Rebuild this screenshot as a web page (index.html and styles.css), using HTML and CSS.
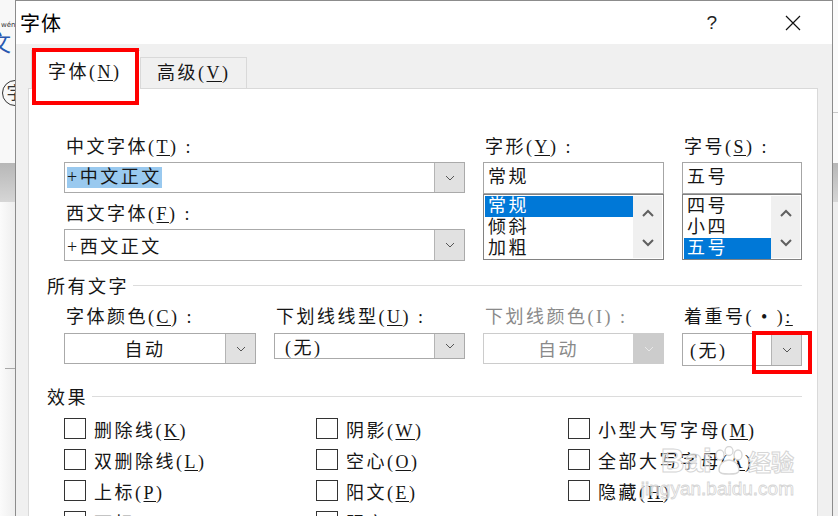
FILE: index.html
```html
<!DOCTYPE html>
<html lang="zh-CN">
<head>
    <meta charset="UTF-8">
    <title>字体</title>
    <link rel="stylesheet" href="styles.css">
</head>
<body>
    <div class="app-edge app-left">
        <div class="ribbon">
            <div class="ruby"><span class="pinyin">wén</span><span class="blue-char">文</span></div>
            <div class="circle-char">字</div>
        </div>
        <div class="band"></div>
        <div class="below"><div class="rule"></div></div>
    </div>

    <div class="dialog">
        <div class="titlebar">
            <span class="title">字体</span>
            <span class="help">?</span>
            <svg class="close" width="16" height="16" viewBox="0 0 16 16"><path d="M1 1L15 15M15 1L1 15" stroke="#111" stroke-width="1.2" fill="none"/></svg>
        </div>

        <div class="dialog-body">
            <div class="tabs">
                <div class="tab active">字体(<u>N</u>)</div>
                <div class="tab">高级(<u>V</u>)</div>
            </div>

            <div class="panel">
                <div class="font-row">
                    <div class="col col-main">
                        <div class="label">中文字体(<u>T</u>) :</div>
                        <div class="combo tall">
                            <span class="value"><span class="selected-text">+中文正文</span></span>
                            <span class="drop"><svg width="10" height="6" viewBox="0 0 10 6"><path d="M1 1L5 5L9 1" fill="none" stroke="#555" stroke-width="1"/></svg></span>
                        </div>
                        <div class="label second">西文字体(<u>F</u>) :</div>
                        <div class="combo taller">
                            <span class="value">+西文正文</span>
                            <span class="drop"><svg width="10" height="6" viewBox="0 0 10 6"><path d="M1 1L5 5L9 1" fill="none" stroke="#555" stroke-width="1"/></svg></span>
                        </div>
                    </div>

                    <div class="col col-style">
                        <div class="label">字形(<u>Y</u>) :</div>
                        <div class="textbox">常规</div>
                        <div class="listbox">
                            <div class="items">
                                <div class="item selected">常规</div>
                                <div class="item">倾斜</div>
                                <div class="item">加粗</div>
                            </div>
                            <div class="scroll">
                                <svg width="12" height="8" viewBox="0 0 12 8"><path d="M1 7L6 2L11 7" fill="none" stroke="#606060" stroke-width="2"/></svg>
                                <svg width="12" height="8" viewBox="0 0 12 8"><path d="M1 1L6 6L11 1" fill="none" stroke="#606060" stroke-width="2"/></svg>
                            </div>
                        </div>
                    </div>

                    <div class="col col-size">
                        <div class="label">字号(<u>S</u>) :</div>
                        <div class="textbox">五号</div>
                        <div class="listbox">
                            <div class="items">
                                <div class="item">四号</div>
                                <div class="item">小四</div>
                                <div class="item selected">五号</div>
                            </div>
                            <div class="scroll">
                                <svg width="12" height="8" viewBox="0 0 12 8"><path d="M1 7L6 2L11 7" fill="none" stroke="#606060" stroke-width="2"/></svg>
                                <svg width="12" height="8" viewBox="0 0 12 8"><path d="M1 1L6 6L11 1" fill="none" stroke="#606060" stroke-width="2"/></svg>
                            </div>
                        </div>
                    </div>
                </div>

                <div class="group-title"><span>所有文字</span><i></i></div>

                <div class="all-row">
                    <div class="field">
                        <div class="label">字体颜色(<u>C</u>) :</div>
                        <div class="combo tall center">
                            <span class="value">自动</span>
                            <span class="drop"><svg width="10" height="6" viewBox="0 0 10 6"><path d="M1 1L5 5L9 1" fill="none" stroke="#555" stroke-width="1"/></svg></span>
                        </div>
                    </div>
                    <div class="field">
                        <div class="label">下划线线型(<u>U</u>) :</div>
                        <div class="combo short-box indent">
                            <span class="value">(无)</span>
                            <span class="drop"><svg width="10" height="6" viewBox="0 0 10 6"><path d="M1 1L5 5L9 1" fill="none" stroke="#555" stroke-width="1"/></svg></span>
                        </div>
                    </div>
                    <div class="field disabled">
                        <div class="label">下划线颜色(I) :</div>
                        <div class="combo tall center">
                            <span class="value">自动</span>
                            <span class="drop"><svg width="10" height="6" viewBox="0 0 10 6"><path d="M1 1L5 5L9 1" fill="none" stroke="#e8e8e8" stroke-width="1"/></svg></span>
                        </div>
                    </div>
                    <div class="field">
                        <div class="label">着重号(&nbsp;•&nbsp;)<u>:</u></div>
                        <div class="combo tallest">
                            <span class="value">(无)</span>
                            <span class="drop"><svg width="10" height="6" viewBox="0 0 10 6"><path d="M1 1L5 5L9 1" fill="none" stroke="#555" stroke-width="1"/></svg></span>
                        </div>
                    </div>
                </div>

                <div class="group-title effects-title"><span>效果</span><i></i></div>

                <div class="effects">
                    <label class="check"><span class="box"></span><span>删除线(<u>K</u>)</span></label>
                    <label class="check"><span class="box"></span><span>阴影(<u>W</u>)</span></label>
                    <label class="check"><span class="box"></span><span>小型大写字母(<u>M</u>)</span></label>
                    <label class="check"><span class="box"></span><span>双删除线(<u>L</u>)</span></label>
                    <label class="check"><span class="box"></span><span>空心(<u>O</u>)</span></label>
                    <label class="check"><span class="box"></span><span>全部大写字母(<u>A</u>)</span></label>
                    <label class="check"><span class="box"></span><span>上标(<u>P</u>)</span></label>
                    <label class="check"><span class="box"></span><span>阳文(<u>E</u>)</span></label>
                    <label class="check"><span class="box"></span><span>隐藏(<u>H</u>)</span></label>
                    <label class="check"><span class="box"></span><span>下标(<u>B</u>)</span></label>
                    <label class="check"><span class="box"></span><span>阴文(<u>G</u>)</span></label>
                </div>
            </div>
        </div>
    </div>

    <div class="app-edge app-right">
        <div class="ribbon"><div class="rule"></div></div>
        <div class="band"></div>
        <div class="below"></div>
    </div>

    <!-- annotation boxes from the screenshot -->
    <div class="mark mark-tab"></div>
    <div class="mark mark-emphasis"></div>

    <div class="watermark">
        <div class="wm-logo">Bai<svg width="34" height="30" viewBox="0 0 34 30"><g fill="#fff" stroke="#d6d6d6" stroke-width="1.3"><ellipse cx="8" cy="9" rx="4" ry="5"/><ellipse cx="17" cy="5" rx="4" ry="4.5"/><ellipse cx="26" cy="9" rx="4" ry="5"/><path d="M7 24c0-6 5-10 10-10s10 4 10 10c0 4-5 4-10 4s-10 0-10-4z"/></g></svg><span class="wm-cn">经验</span></div>
        <div class="wm-url">jingyan.baidu.com</div>
    </div>
</body>
</html>
```

FILE: styles.css
```css
* {
    box-sizing: border-box;
}

body {
    margin: 0;
    width: 838px;
    height: 516px;
    overflow: hidden;
    display: flex;
    position: relative;
    background-color: #f3f3f3;
    font-family: "Liberation Serif", "Noto Sans CJK SC", serif;
    font-size: 18px;
    letter-spacing: 2.5px;
    color: #161616;
}

u {
    text-decoration-thickness: 1px;
    text-underline-offset: 2px;
}

/* Word window showing behind the dialog */
.app-edge {
    flex: none;
    display: flex;
    flex-direction: column;
    overflow: hidden;
}

.app-left {
    width: 15px;
}

.app-right {
    width: 5px;
}

.ribbon {
    height: 163px;
    background-color: #f8f8f8;
    overflow: hidden;
}

.app-left .ribbon {
    padding-top: 22px;
}

.ruby {
    display: flex;
    flex-direction: column;
    line-height: 1;
    letter-spacing: 0;
}

.pinyin {
    font-family: "DejaVu Sans", sans-serif;
    font-size: 7px;
    color: #333;
    margin-left: 1px;
}

.blue-char {
    font-family: "Noto Sans CJK SC", sans-serif;
    font-size: 22px;
    color: #2857b0;
    margin-left: -11px;
    margin-top: 1px;
}

.circle-char {
    width: 26px;
    height: 26px;
    margin: 28px 0 0 2px;
    border: 1.5px solid #333;
    border-radius: 50%;
    font-family: "Noto Sans CJK SC", sans-serif;
    font-size: 17px;
    line-height: 22px;
    letter-spacing: 0;
    text-align: center;
    color: #333;
}

.band {
    height: 39px;
    background: linear-gradient(#b7b7b7, #d6d6d6);
}

.below {
    flex: 1;
    background: linear-gradient(90deg, #fbfbfb, #eeeeee);
}

.app-left .rule {
    margin: 166px 0 0 5px;
    height: 1px;
    background-color: #a8a8a8;
}

.app-right .ribbon {
    background-color: #fafafa;
    padding-top: 112px;
}

.app-right .rule {
    height: 1px;
    background-color: #c8c8c8;
}

.app-right .below {
    background: #eeeeee;
}

/* dialog */
.dialog {
    width: 818px;
    flex: none;
    display: flex;
    flex-direction: column;
    border: 1px solid #8c8c8c;
    border-bottom: none;
    background-color: #f0f0f0;
}

.titlebar {
    height: 43px;
    flex: none;
    display: flex;
    align-items: center;
    background-color: #fff;
}

.title {
    padding-left: 4px;
    font-size: 20px;
    letter-spacing: 1px;
    color: #000;
}

.help {
    margin-left: auto;
    margin-right: 68px;
    font-family: "Liberation Sans", sans-serif;
    font-size: 19px;
    letter-spacing: 0;
    color: #222;
}

.close {
    margin-right: 31px;
}

.dialog-body {
    flex: 1;
    display: flex;
    flex-direction: column;
    padding: 0 14px 0 12px;
}

.tabs {
    height: 44px;
    flex: none;
    display: flex;
    align-items: flex-end;
    padding-left: 3px;
}

.tab {
    height: 31px;
    width: 107px;
    padding-left: 16px;
    line-height: 30px;
    border: 1px solid #d9d9d9;
    border-bottom: none;
    background-color: #f0f0f0;
}

.tab.active {
    position: relative;
    z-index: 1;
    height: 39px;
    width: 109px;
    margin-bottom: -1px;
    padding-left: 16px;
    line-height: 43px;
    background-color: #fff;
    border-right: none;
}

.panel {
    flex: 1;
    background-color: #fff;
    border: 1px solid #d9d9d9;
    border-bottom: none;
    padding: 46px 14px 0 35px;
}

.label {
    height: 24px;
    line-height: 24px;
    padding-left: 2px;
    margin-bottom: 3px;
    white-space: nowrap;
}

.label.second {
    margin-top: 9px;
}

.font-row {
    display: flex;
    gap: 18px;
}

.col-main {
    width: 401px;
}

.col-style {
    width: 181px;
}

.col-size {
    width: 120px;
}

/* combo boxes */
.combo {
    display: flex;
    height: 31px;
    border: 1px solid #aaaaaa;
    background-color: #fff;
}

.combo.taller {
    height: 32px;
}

.combo.tallest {
    height: 33px;
}

.combo.short-box {
    height: 26px;
}

.combo .value {
    flex: 1;
    display: flex;
    align-items: center;
    padding-left: 2px;
    white-space: nowrap;
}

.combo.center .value {
    justify-content: center;
    padding-left: 0;
    padding-bottom: 2px;
}

.combo.indent .value {
    padding-left: 10px;
}

.combo.tallest .value {
    padding-left: 7px;
    padding-bottom: 2px;
}

.selected-text {
    background-color: #99c9ef;
    line-height: 21px;
}

.drop {
    width: 30px;
    flex: none;
    display: flex;
    align-items: center;
    justify-content: center;
    background-color: #e1e1e1;
    border-left: 1px solid #b4b4b4;
}

.disabled .label,
.disabled .value {
    color: #8a8a8a;
}

.disabled .combo {
    border-color: #cccccc;
}

.disabled .drop {
    background-color: #cccccc;
    border-left-color: #cccccc;
}

/* text + list boxes */
.textbox {
    height: 32px;
    border: 1px solid #a6a6a6;
    padding-left: 4px;
    line-height: 28px;
}

.listbox {
    height: 66px;
    display: flex;
    border: 1px solid #828282;
    padding: 1px;
}

.items {
    flex: 1;
}

.item {
    height: 21px;
    line-height: 21px;
    padding-left: 3px;
}

.item.selected {
    background-color: #0078d7;
    color: #fff;
}

.scroll {
    width: 29px;
    flex: none;
    display: flex;
    flex-direction: column;
    align-items: center;
    justify-content: space-between;
    padding: 13px 0 11px;
    background-color: #f0f0f0;
}

/* group titles */
.group-title {
    display: flex;
    align-items: center;
    gap: 4px;
    height: 24px;
    margin: 12px 0 0 -17px;
}

.group-title i {
    flex: 1;
    height: 1px;
    margin-right: 1px;
    background-color: #dcdcdc;
}

.effects-title {
    margin-top: 18px;
}

.all-row {
    display: grid;
    grid-template-columns: 192px 191px 181px 120px;
    column-gap: 18px;
    align-items: start;
    margin-top: 8px;
}

.all-row .label {
    margin-bottom: 4px;
}

/* effects check boxes */
.effects {
    display: grid;
    grid-template-columns: 252px 252px 1fr;
    grid-auto-rows: 31px;
    margin-top: 5px;
}

.check {
    display: flex;
    align-items: center;
    gap: 8px;
    white-space: nowrap;
}

.check .box {
    width: 22px;
    height: 21px;
    flex: none;
    border: 1px solid #333;
    background-color: #fff;
}

/* red annotation rectangles */
.mark {
    position: absolute;
    border: 4px solid #ff0000;
    z-index: 5;
}

.mark-tab {
    left: 32px;
    top: 48px;
    width: 107px;
    height: 57px;
}

.mark-emphasis {
    left: 752px;
    top: 331px;
    width: 60px;
    height: 43px;
}

/* faint site watermark */
.watermark {
    position: absolute;
    right: 44px;
    top: 444px;
    z-index: 4;
    text-align: right;
    letter-spacing: 0;
    pointer-events: none;
}

.wm-logo {
    display: flex;
    align-items: center;
    justify-content: flex-end;
    font-family: "Liberation Sans", sans-serif;
    font-weight: bold;
    font-size: 33px;
    line-height: 34px;
    color: rgba(255, 255, 255, 0.55);
    -webkit-text-stroke: 1px #d6d6d6;
}

.wm-cn {
    font-family: "Noto Sans CJK SC", sans-serif;
    font-size: 23px;
    font-weight: bold;
    margin-left: 2px;
}

.wm-url {
    margin-top: 2px;
    font-family: "Liberation Sans", sans-serif;
    font-size: 19px;
    line-height: 18px;
    color: rgba(255, 255, 255, 0.5);
    -webkit-text-stroke: 0.8px #d4d4d4;
}
```
